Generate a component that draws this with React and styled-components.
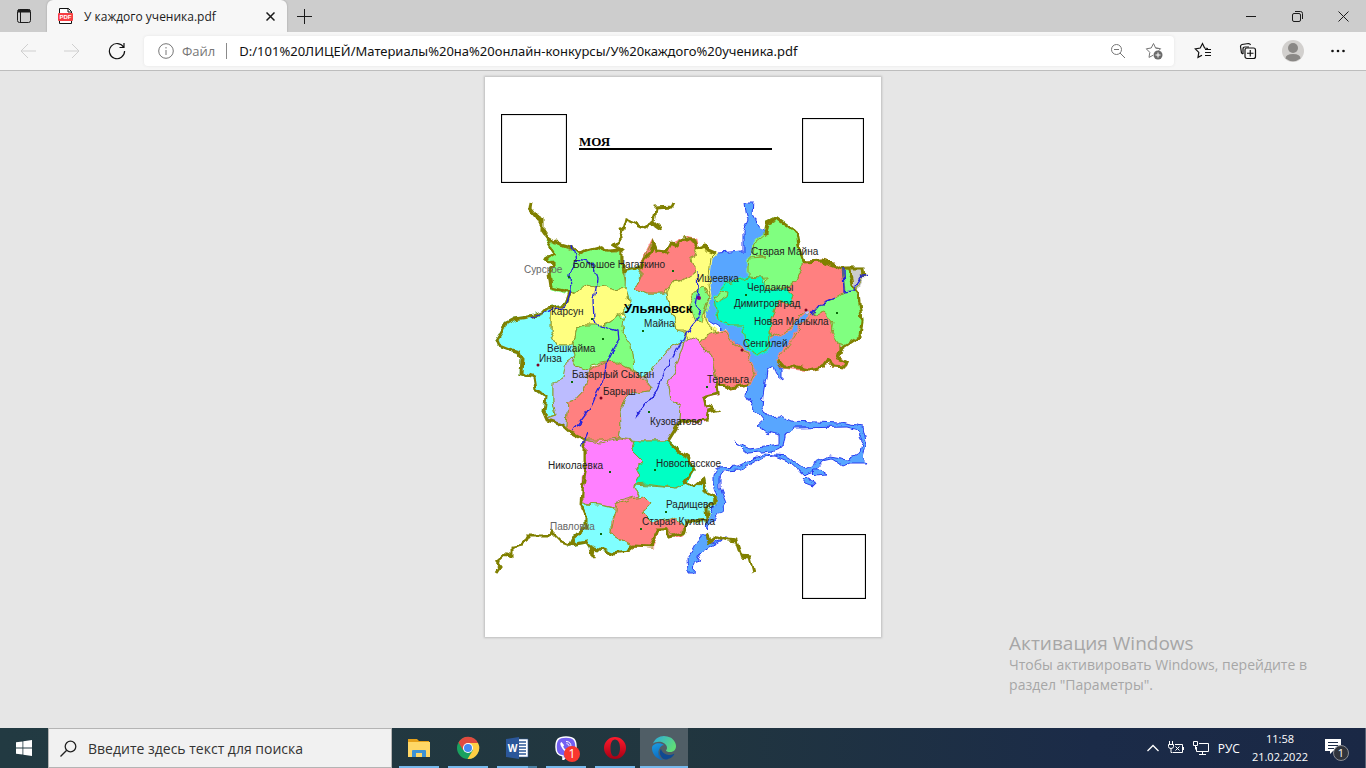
import React from 'react';
import styled, { createGlobalStyle, css } from 'styled-components';

const GlobalStyle = createGlobalStyle`
  * {
    box-sizing: border-box;
  }
  body {
    margin: 0;
    overflow: hidden;
    font-family: 'Open Sans', 'Noto Sans', sans-serif;
    color: #1b1b1b;
  }
  button {
    padding: 0;
    border: 0;
    background: none;
    font: inherit;
    color: inherit;
  }
  svg {
    display: block;
  }
`;

/* ---------- map data ---------- */

const colors = {
  green: '#80ff80',
  yellow: '#ffff80',
  cyan: '#80ffff',
  red: '#ff8080',
  lilac: '#bcbcff',
  pink: '#ff80ff',
  teal: '#00ffc4',
  grey: '#cccccc',
};

const districts = [
  ['green', '546,238 552,243 561,246 568,249 574,251 579,255 587,251 597,248 607,252 621,252 621,265 624,274 626,287 612,289 606,286 594,288 584,285 577,291 568,293 552,288 550,274 554,265 546,258 554,253 549,245'],
  ['cyan', '626,270 631,268 641,268 639,280 636,288 647,293 667,293 669,307 674,320 676,330 684,332 684,342 671,347 657,363 644,378 634,370 631,347 622,332 624,310 629,300 625,287'],
  ['red', '641,268 644,258 652,242 655,252 666,253 671,245 684,238 695,240 697,248 692,258 696,270 688,280 671,283 664,293 647,293 636,288 641,277'],
  ['yellow', '697,248 705,245 708,250 715,254 711,258 708,285 710,297 704,312 708,325 717,332 725,330 723,336 710,338 700,342 688,338 684,330 676,330 674,320 669,307 667,293 671,283 680,282 695,272 692,258'],
  ['green', '694,291 705,288 709,298 704,312 702,322 695,320 690,305'],
  ['yellow', '570,293 566,305 551,307 551,333 557,345 572,345 576,328 587,325 601,326 617,317 622,313 629,302 626,287 612,289 606,286 594,288 584,285 577,291'],
  ['green', '576,328 587,325 605,325 617,316 624,320 622,332 631,345 634,370 615,363 605,362 590,365 588,370 575,366 574,350 572,345'],
  ['cyan', '566,305 551,307 542,313 534,316 514,319 506,323 502,332 497,340 499,345 509,349 519,352 522,360 521,373 534,377 536,390 546,397 544,413 550,417 556,415 553,400 553,385 565,377 568,360 575,356 572,345 557,345 551,333 551,308'],
  ['lilac', '563,377 566,362 572,357 576,366 588,370 592,372 584,390 575,400 568,402 566,427 552,422 547,418 556,415 553,400 553,382'],
  ['red', '590,370 605,363 618,362 634,372 641,378 651,387 650,391 635,393 625,397 620,410 621,425 618,438 600,440 585,440 571,433 566,425 568,402 575,400 584,390'],
  ['lilac', '684,342 671,347 657,363 644,378 651,387 650,391 635,393 625,397 620,410 621,425 618,438 640,441 668,441 671,436 680,422 681,405 670,400 668,385 674,372 680,355'],
  ['pink', '684,342 690,337 700,343 712,357 715,375 718,393 703,397 705,405 708,412 705,421 680,422 681,405 670,400 668,385 674,372 680,355'],
  ['red', '700,343 702,338 715,333 725,330 735,345 747,353 755,370 748,385 730,388 718,383 714,370 712,357'],
  ['pink', '584,440 600,443 618,439 634,441 632,450 644,462 636,467 640,475 634,485 638,495 620,500 615,508 600,505 583,503 583,480 586,465'],
  ['cyan', '634,485 664,487 677,488 686,483 695,487 703,481 706,493 717,498 709,510 706,522 687,522 680,530 655,528 640,515 638,495'],
  ['teal', '634,441 645,441 668,441 680,452 690,463 693,470 686,483 675,488 660,486 645,484 634,485 640,475 636,467 644,462 632,450'],
  ['cyan', '582,504 600,505 612,508 617,512 611,520 611,533 617,537 632,546 627,552 614,553 600,549 591,548 587,542 570,545 574,537 586,527 586,517'],
  ['red', '617,505 630,499 644,497 649,502 642,513 651,522 671,518 684,525 682,535 674,537 667,528 657,530 652,547 634,546 617,537 611,533 614,518'],
  ['red', '804,262 823,261 842,268 845,292 838,300 832,300 830,315 833,330 840,343 838,358 847,362 845,367 833,366 827,360 822,367 810,370 783,367 777,360 790,343 798,330 812,315 806,310 800,315 790,330 772,337 770,332 771,318 779,300 790,303 793,295 785,288 795,283'],
  ['green', '777,218 787,225 797,233 800,250 804,262 800,272 795,283 785,288 765,290 767,278 748,279 748,268 749,258 765,257 753,255 755,243 765,235 767,223'],
  ['teal', '718,320 715,297 726,284 740,280 748,277 762,278 767,290 785,288 793,295 790,303 779,300 771,318 770,332 769,348 758,355 748,348 743,325 730,325'],
  ['green', '715,298 721,291 728,292 727,297 719,301'],
  ['green', '842,268 850,270 853,285 858,292 862,320 860,335 845,345 838,343 832,333 834,322 823,312 813,315 822,303 837,297 845,292'],
  ['grey', '850,268 862,268 862,277 857,287 853,285'],
];

const waters = [
  // Volga with its reservoir and the southern loop
  '745,202 754,202 753,215 760,228 767,234 757,240 755,250 749,258 748,278 738,281 726,284 715,297 718,318 730,325 743,325 748,348 758,355 768,349 770,336 790,330 800,315 808,310 812,315 798,330 790,343 777,360 782,370 782,380 777,376 774,366 767,370 763,395 762,408 767,417 780,416 790,421 840,423 863,427 866,441 862,457 867,463 850,463 843,466 832,459 823,461 815,470 803,474 790,462 775,456 763,457 740,470 724,471 720,478 720,488 726,503 720,513 707,530 706,522 718,497 713,483 713,475 718,467 738,466 763,454 788,456 804,469 822,460 830,457 847,460 860,453 863,440 858,430 847,427 795,428 785,435 783,447 772,451 748,453 735,442 750,449 765,447 779,445 779,435 767,432 757,425 763,420 755,410 747,395 748,385 755,370 747,353 735,343 723,330 707,320 705,313 710,297 708,283 711,258 717,253 743,251 743,232 748,220 746,212',
  '700,536 706,536 709,544 720,540 728,537 710,547 703,552 697,554 701,560 695,562 694,573 688,573 687,558 694,548',
  '802,478 809,477 814,486 806,483',
  '811,469 820,469 827,474 817,475',
];

const borders = [
  '531,202 530,208 537,217 542,220 542,230 547,237 561,245 572,248 579,254 587,250 597,247 607,251 622,250',
  '674,203 672,207 656,208 654,223 661,230 651,223 644,227 626,219 624,227 619,230 622,238 614,245 622,250 622,262 624,270 631,268 641,268 644,260 651,253 653,243 657,252 666,253 671,243 677,245 684,237 686,240 693,240 697,248 705,245 708,250 715,253',
  '547,237 549,245 554,253 546,258 554,265 549,273 551,287 566,290 570,293 566,305 547,308 542,313 534,316 514,319 506,323 502,332 497,340 499,345 509,349 519,352 522,360 521,373 534,377 536,390 546,397 544,413 547,420 562,425 571,433 584,440 584,460 586,467 582,490 581,505 586,517 586,527 574,537 570,545 587,542 591,548 593,557 594,548 604,550 614,554 627,552 634,546 651,547 657,530 667,530 669,537 684,533 687,522 707,520 706,508 717,498 705,492 703,480 695,487 685,482 693,470 687,457 680,452 668,441 680,422 707,420 708,412 716,410 705,405 703,397 718,393 717,383 730,388 748,385',
  '570,545 561,542 554,535 551,532 549,536 527,536 522,545 512,547 512,556 507,554 497,563 500,567 496,573',
  '765,235 767,223 777,218 787,225 797,233 800,250 804,262 823,261 842,268 862,268 863,277',
  '850,269 853,285 859,293 862,320 860,337 840,350 838,358 847,362 845,367 833,366 827,360 822,367 810,370 797,367 783,367 777,360',
  '707,533 709,543 717,537 728,540 736,541 741,556 750,557 754,573',
];

const streams = [
  '572,247 576,260 570,275 571,290 566,307 545,312 530,318',
  '576,260 592,263 597,278 593,300 594,320 600,326 618,331 619,340 612,352 606,364 604,380 597,393 592,405 583,417 577,425 573,432',
  '697,270 698,290 695,305 700,315 692,325 684,337 676,352 665,370 657,390 645,405 635,417',
  '812,315 822,303 835,297',
  '843,268 844,292 853,291 857,283 862,276 868,275',
  '588,433 585,440 581,448',
];

const towns = [
  ['Сурское', 524, 273, 'faded'],
  ['Большое Нагаткино', 573, 268],
  ['Ишеевка', 697, 282],
  ['Старая Майна', 751, 255],
  ['Чердаклы', 747, 291],
  ['Димитровград', 734, 307],
  ['Новая Малыкла', 754, 325],
  ['Сенгилей', 743, 347],
  ['Тереньга', 707, 383],
  ['Карсун', 551, 315],
  ['Ульяновск', 624, 313, 'capital'],
  ['Майна', 644, 327],
  ['Вешкайма', 547, 352],
  ['Инза', 539, 362],
  ['Базарный Сызган', 572, 378],
  ['Барыш', 603, 395],
  ['Кузоватово', 650, 425],
  ['Новоспасское', 656, 467],
  ['Николаевка', 548, 469],
  ['Радищево', 666, 508],
  ['Старая Кулатка', 642, 525],
  ['Павловка', 550, 530, 'faded'],
];

const villages = ['568,276', '672,270', '642,330', '602,338', '571,381', '648,411', '706,386', '609,471', '654,469', '665,511', '600,533', '640,528', '745,294', '836,312', '591,318'];
const cities = ['538,365', '601,398', '742,350', '806,310'];

const RegionMap = () => (
  <MapSvg viewBox="494 201 374 373" role="img" aria-label="Карта">
    <filter id="coast" x="0" y="0" width="1" height="1">
      <feTurbulence type="fractalNoise" baseFrequency="0.14" numOctaves="1" seed="4" />
      <feDisplacementMap in="SourceGraphic" scale="8" xChannelSelector="R" yChannelSelector="G" />
    </filter>
    <g filter="url(#coast)">
      {/* keeps the filter area equal to the whole view */}
      <rect x="494" y="201" width="374" height="373" fill="#fff" />
      {waters.map((points) => (
        <polygon key={points} points={points} fill="#59a6ff" stroke="#2a3cf0" />
      ))}
      {/* wide strokes close the seams between neighbours */}
      {districts.map(([color, points]) => (
        <polygon key={points} points={points} fill={colors[color]} stroke={colors[color]} strokeWidth="3" />
      ))}
      {districts.map(([color, points]) => (
        <polygon key={points} points={points} fill={colors[color]} stroke="#8f9a2c" />
      ))}
      {borders.map((points) => (
        <polyline key={points} points={points} fill="none" stroke="#808000" strokeWidth="3" />
      ))}
      {streams.map((points) => (
        <polyline key={points} points={points} fill="none" stroke="#2222dd" strokeWidth="1.3" />
      ))}
      <path d="M803 311q4-2 8 2l-3 3z" fill="#bcbcff" stroke="#8f9a2c" strokeWidth=".5" />
    </g>
    {villages.map((spot) => {
      const [x, y] = spot.split(',');
      return <rect key={spot} x={x} y={y} width="2" height="2" fill="#0a6b0a" />;
    })}
    {cities.map((spot) => {
      const [x, y] = spot.split(',');
      return <circle key={spot} cx={x} cy={y} r="1.5" fill="#800020" />;
    })}
    <circle cx="699" cy="298" r="2" fill="#800080" />
    {towns.map(([name, x, y, kind]) => (
      <Town key={name} x={x} y={y} $kind={kind}>
        {name}
      </Town>
    ))}
  </MapSvg>
);

/* ---------- icons ---------- */

const Line = ({ size = 16, box = 16, children, ...rest }) => (
  <svg width={size} height={size} viewBox={`0 0 ${box} ${box}`} fill="none" stroke="currentColor" aria-hidden="true" {...rest}>
    {children}
  </svg>
);

const TabsIcon = () => (
  <Line>
    <rect x="1.5" y="1.5" width="13" height="13" rx="2" />
    <path d="M4.5 4v10" />
    <path d="M2 3h12" strokeWidth="3" />
  </Line>
);

const PdfIcon = () => (
  <svg width="16" height="16" viewBox="0 0 16 16" aria-hidden="true">
    <path d="M1.5 15.5V.5h9l3 3v12z" fill="#fff" stroke="#111" />
    <path d="M10 .5V4h3.5" fill="none" stroke="#111" />
    <rect y="5" width="15" height="8" rx="1" fill="#f73e42" />
    <text x="7.5" y="11" textAnchor="middle" fontSize="6" fontWeight="700" fontFamily="Liberation Sans, sans-serif" fill="#fff">PDF</text>
  </svg>
);

const starPath = 'M14 6.5 10.6 6 8.5 1.5 6.2 6 1.3 6.8l3.5 3.6-.8 5 4-2.1';

const ExplorerIcon = () => (
  <svg width="24" height="24" viewBox="0 0 24 24" aria-hidden="true">
    <path d="M1 3h9l2 2h10v15H1z" fill="#e6a11a" />
    <path d="M1 6h22v15H1z" fill="#ffd766" />
    <path d="M5 21v-6q0-1 1-1h12q1 0 1 1v6h-4v-4H9v4z" fill="#3d92d4" />
  </svg>
);

const ChromeIcon = () => (
  <svg width="24" height="24" viewBox="0 0 24 24" aria-hidden="true">
    <circle cx="12" cy="12" r="11" fill="#1aa15f" />
    <path d="M2.5 6.5A11 11 0 0 1 22 7H12L7 14z" fill="#e04a3f" />
    <path d="M22 7A11 11 0 0 1 11.5 23L17 14 12 7z" fill="#ffce44" />
    <circle cx="12" cy="12" r="5" fill="#fff" />
    <circle cx="12" cy="12" r="4" fill="#4688f1" />
  </svg>
);

const WordIcon = () => (
  <svg width="24" height="24" viewBox="0 0 24 24" aria-hidden="true">
    <path d="M13 3h10v18H13z" fill="#fff" stroke="#2b5797" strokeWidth=".6" />
    <path d="M14 6h7M14 9h7M14 12h7M14 15h7M14 18h7" stroke="#2b5797" strokeWidth="1.4" />
    <path d="M1 3 14 1v22L1 21z" fill="#2b579a" />
    <text x="7.5" y="16" textAnchor="middle" fontSize="10" fontWeight="700" fontFamily="Open Sans, sans-serif" fill="#fff">W</text>
  </svg>
);

const ViberIcon = () => (
  <svg width="24" height="24" viewBox="0 0 24 24" aria-hidden="true">
    <path d="M12 1c8 0 10 3 10 10 0 6-3 9-9 9l-4 4v-4c-5-1-7-3-7-9C2 4 4 1 12 1z" fill="#7360f2" stroke="#fff" strokeWidth="1.5" />
    <path d="M7.500 6c-2 1-1 3 0 5 1.500 3 3.500 5 6.500 6 2 .5 3-2 2-2.700l-2.300-1.500-1.500 1.200c-1.500-.5-2.500-2-3-3.400l1-1.300z" fill="#fff" />
    <path d="M12 5.500c3.500 0 5 2 5 5M12.500 7.700c1.700.2 2.500 1 2.600 2.600" fill="none" stroke="#fff" />
  </svg>
);

const OperaIcon = () => (
  <svg width="24" height="24" viewBox="0 0 24 24" aria-hidden="true">
    <linearGradient id="opera" x2="0" y2="1">
      <stop stopColor="#ff1b2d" />
      <stop offset="1" stopColor="#a70014" />
    </linearGradient>
    <path fillRule="evenodd" d="M12 1a11 11 0 1 0 0 22 11 11 0 0 0 0-22zm0 2.500c3 0 5 3.500 5 8.500s-2 8.500-5 8.500S7.500 17 7.500 12s1.500-8.500 4.500-8.500z" fill="url(#opera)" />
  </svg>
);

const EdgeIcon = () => (
  <svg width="24" height="24" viewBox="0 0 24 24" aria-hidden="true">
    <linearGradient id="edgeTop" x2="1" y2=".5">
      <stop stopColor="#2aa8e0" />
      <stop offset="1" stopColor="#5fdc78" />
    </linearGradient>
    <linearGradient id="edgeLow" x2=".3" y2="1">
      <stop stopColor="#1b9de2" />
      <stop offset="1" stopColor="#0f6cc0" />
    </linearGradient>
    <path d="M21.860 17.860q.14 0 .25.12.1.13.1.25t-.11.33l-.32.46-.43.53-.44.5q-.26.25-.38.37l-.22.23q-.58.53-1.340 1.040-.76.51-1.600.91-.86.4-1.740.64t-1.670.24q-.9 0-1.690-.28-.8-.28-1.480-.78-.68-.5-1.220-1.170-.53-.66-.92-1.440-.38-.77-.58-1.600-.2-.83-.2-1.670 0-1 .32-1.960.33-.97.87-1.800.14.95.55 1.770.41.82 1.020 1.500.6.68 1.380 1.210.78.54 1.640.9.86.36 1.770.56.92.2 1.800.2 1.120 0 2.180-.24 1.060-.23 2.060-.72l.2-.1.2-.05z" fill="#104a91" />
    <path d="M6.360 16.590q0 1.100.27 2.150.27 1.060.78 2.030.51.96 1.240 1.770.74.82 1.660 1.400-1.470-.2-2.800-.74-1.330-.55-2.480-1.370-1.150-.83-2.080-1.900-.92-1.070-1.580-2.330T.36 14.940Q0 13.540 0 12.060q0-.81.32-1.490.31-.68.83-1.230.53-.55 1.200-.96.66-.4 1.350-.66.74-.27 1.500-.39.78-.12 1.550-.12.7 0 1.420.1.72.12 1.400.35.68.23 1.320.57.63.35 1.160.83-.35 0-.7.07-.33.07-.65.23v-.02q-.63.28-1.200.74-.57.46-1.050 1.040-.48.58-.87 1.260-.38.67-.65 1.390-.27.71-.42 1.440-.15.72-.15 1.380z" fill="url(#edgeLow)" />
    <path d="M8 14q-2 3 0 7 1.500 2.500 4.500 2.900Q9 24 7 20.500 5.500 17 8 14z" fill="#0f6cc0" />
    <path d="M11.960.06q1.700 0 3.330.39 1.630.38 3.070 1.150 1.430.77 2.620 1.930 1.180 1.160 1.980 2.700.49.94.76 1.960.28 1 .28 2.080 0 .89-.23 1.700-.24.8-.69 1.480-.45.68-1.100 1.220-.64.53-1.450.88-.54.24-1.110.36-.58.13-1.160.13-.42 0-.97-.03-.54-.03-1.100-.12-.55-.1-1.050-.28-.5-.19-.84-.5-.12-.09-.23-.24-.1-.16-.1-.33 0-.15.16-.35.16-.2.35-.5.2-.28.36-.68.16-.4.16-.95 0-1.060-.4-1.960-.4-.91-1.060-1.640-.66-.74-1.520-1.280-.86-.55-1.790-.89-.84-.3-1.720-.44-.87-.14-1.760-.14-1.550 0-3.060.45T.94 7.550q.71-1.740 1.810-3.130 1.100-1.380 2.520-2.350Q6.680 1.100 8.370.58q1.700-.52 3.580-.52Z" fill="url(#edgeTop)" />
  </svg>
);

const apps = [
  { name: 'Проводник', icon: <ExplorerIcon /> },
  { name: 'Chrome', icon: <ChromeIcon /> },
  { name: 'Word', icon: <WordIcon />, stacked: true },
  { name: 'Viber', icon: <ViberIcon />, badge: 1 },
  { name: 'Opera', icon: <OperaIcon /> },
  { name: 'Edge', icon: <EdgeIcon />, active: true },
];

/* ---------- page ---------- */

const App = () => (
  <Desktop>
    <GlobalStyle />
    <TitleBar>
      <TabMenu aria-label="Меню вкладок"><TabsIcon /></TabMenu>
      <Tab>
        <PdfIcon />
        <TabName>У каждого ученика.pdf</TabName>
        <CloseTab aria-label="Закрыть вкладку">
          <Line size={9} box={9} strokeWidth="1.5"><path d="M.5.5l8 8M8.500.5l-8 8" /></Line>
        </CloseTab>
      </Tab>
      <NewTab aria-label="Новая вкладка">
        <Line size={15} box={15}><path d="M7.500 0v15M0 7.500h15" /></Line>
      </NewTab>
      <WindowButtons>
        <button aria-label="Свернуть"><Line size={10} box={10}><path d="M0 5.500h10" /></Line></button>
        <button aria-label="Восстановить">
          <Line size={11} box={11}>
            <rect x=".5" y="2.500" width="8" height="8" rx="1.500" />
            <path d="M3 .5h5.500q2 0 2 2V8" />
          </Line>
        </button>
        <button aria-label="Закрыть"><Line size={11} box={11}><path d="M.5.5l10 10M10.500.5l-10 10" /></Line></button>
      </WindowButtons>
    </TitleBar>

    <Toolbar>
      <ToolButton disabled aria-label="Назад"><Line><path d="M8 1 1 8l7 7M1 8h15" /></Line></ToolButton>
      <ToolButton disabled aria-label="Вперед"><Line><path d="m8 1 7 7-7 7M15 8H0" /></Line></ToolButton>
      <ToolButton aria-label="Обновить">
        <Line size={18} box={18} strokeWidth="1.2"><path d="M15.700 5.500A7.600 7.600 0 1 0 16.600 9M16 1v4.500h-4.500" /></Line>
      </ToolButton>
      <AddressBar>
        <Line><circle cx="8" cy="8" r="7.300" /><path d="M8 7v5M8 4v1.500" /></Line>
        <Scheme htmlFor="address">Файл</Scheme>
        <Address id="address" defaultValue="D:/101%20ЛИЦЕЙ/Материалы%20на%20онлайн-конкурсы/У%20каждого%20ученика.pdf" />
        <AddressButton aria-label="Уменьшить">
          <Line><circle cx="6.500" cy="6.500" r="5" /><path d="m10 10 5 5M4 6.500h5" /></Line>
        </AddressButton>
        <AddressButton aria-label="Добавить в избранное">
          <Line size={18} box={18}>
            <path d={starPath} />
            <path d="M10.600 6l5 .7-2 2" />
            <circle cx="13" cy="13" r="4.500" fill="#6b6b6b" stroke="none" />
            <path d="M13 10.500v5M10.500 13h5" stroke="#fff" />
          </Line>
        </AddressButton>
      </AddressBar>
      <ToolButton aria-label="Избранное">
        <Line size={18} box={18}>
          <path d={starPath} strokeWidth="1.2" />
          <path d="M11 7.500h6M11 10.500h6M11 13.500h6" strokeWidth="1.2" />
        </Line>
      </ToolButton>
      <ToolButton aria-label="Коллекции">
        <Line size={18} box={18} strokeWidth="1.2">
          <path d="M4 12 2.500 11 1.500 4.500q0-1.500 1.500-2l6.500-1q1.500 0 2 1.500" />
          <path d="M4 12V7q0-2 2-2h4" />
          <rect x="6" y="6" width="10.500" height="10.500" rx="2" />
          <path d="M11.250 8v6.500M8 11.250h6.500" />
        </Line>
      </ToolButton>
      <ToolButton aria-label="Профиль">
        <svg width="22" height="22" viewBox="0 0 22 22" aria-hidden="true">
          <circle cx="11" cy="11" r="11" fill="#d2d0ce" />
          <circle cx="11" cy="8" r="5" fill="#8a8886" />
          <path d="M3.500 18.500q0-4.500 7.500-4.500t7.500 4.500q-7.500 5.500-15 0z" fill="#8a8886" />
        </svg>
      </ToolButton>
      <ToolButton aria-label="Параметры">
        <Line><g fill="currentColor" stroke="none"><circle cx="2.500" cy="8" r="1.300" /><circle cx="8" cy="8" r="1.300" /><circle cx="13.500" cy="8" r="1.300" /></g></Line>
      </ToolButton>
    </Toolbar>

    <Viewer>
      <Sheet>
        <SheetHeader>
          <Frame $width={66} $height={69} />
          <SheetTitle>МОЯ</SheetTitle>
          <Frame $width={62} $height={65} />
        </SheetHeader>
        <Figure>
          <RegionMap />
          <CornerFrame $width={64} $height={65} />
        </Figure>
      </Sheet>
      <Activation>
        <h2>Активация Windows</h2>
        <p>Чтобы активировать Windows, перейдите в<br />раздел "Параметры".</p>
      </Activation>
    </Viewer>

    <Taskbar>
      <Start aria-label="Пуск">
        <svg width="16" height="16" viewBox="0 0 16 16" fill="#fff" aria-hidden="true">
          <path d="M0 2.300 6.500 1.400v6.100H0zM7.300 1.300 16 0v7.500H7.300zM0 8.400h6.500v6.200L0 13.700zM7.300 8.400H16V16l-8.700-1.200z" />
        </svg>
      </Start>
      <Search>
        <Line size={17} box={17} strokeWidth="1.3"><circle cx="10.500" cy="6.500" r="5.300" /><path d="M6.700 10.300.5 16.500" /></Line>
        <input aria-label="Поиск" placeholder="Введите здесь текст для поиска" />
      </Search>
      <Apps>
        {apps.map(({ name, icon, badge, active, stacked }) => (
          <AppButton key={name} aria-label={name} $active={active} $stacked={stacked}>
            {icon}
            {badge && <Badge>{badge}</Badge>}
          </AppButton>
        ))}
      </Apps>
      <Tray>
        <Line size={12} box={12} strokeWidth="1.3"><path d="m.5 9 5.500-5.500L11.500 9" /></Line>
        <Line>
          <path d="M1.500 1v3M4.500 1v3M.5 4.500h5v2q0 2-2.500 2t-2.500-2zM3 8.500v4h1.500" />
          <path d="M7 4.500h7.500v8H5M15.500 7v3M7.500 6.500l4 4M11.500 6.500l-4 4" />
        </Line>
        <Line>
          <path d="M6 3.500h9.500v8h-12V7M9.500 11.500v3M6 14.500h7M.5 1.500h4v4h-4zM2.500 5.500v4" />
        </Line>
        <span>РУС</span>
        <Clock>
          <span>11:58</span>
          <span>21.02.2022</span>
        </Clock>
        <Notices aria-label="Уведомления">
          <svg width="24" height="24" viewBox="0 0 24 24" aria-hidden="true">
            <path d="M0 1h16v12H8l-3 3v-3H0z" fill="#fff" />
            <path d="M3 4.500h10M3 7.500h10M3 10.500h6" stroke="#1c2c48" />
          </svg>
          <NoticeCount>1</NoticeCount>
        </Notices>
      </Tray>
    </Taskbar>
  </Desktop>
);

const Desktop = styled.div`
  display: flex;
  flex-direction: column;
  height: 100vh;
`;

const TitleBar = styled.header`
  display: flex;
  align-items: stretch;
  height: 32px;
  background: #cdcdcd;
`;

const TabMenu = styled.button`
  display: grid;
  place-items: center;
  width: 47px;
`;

const Tab = styled.div`
  display: flex;
  align-items: center;
  gap: 10px;
  width: 240px;
  padding: 0 12px 0 11px;
  border-radius: 6px 6px 0 0;
  background: #f7f7f7;
  box-shadow: 0 0 2px #999;
  clip-path: inset(0 -3px 0 -3px);
`;

const TabName = styled.span`
  flex: 1;
  font-size: 12px;
`;

const CloseTab = styled.button`
  display: grid;
  place-items: center;
`;

const NewTab = styled.button`
  display: grid;
  place-items: center;
  width: 34px;
`;

const WindowButtons = styled.div`
  display: flex;
  margin-left: auto;
  button {
    display: grid;
    place-items: center;
    width: 46px;
  }
`;

const Toolbar = styled.nav`
  display: flex;
  align-items: center;
  height: 39px;
  padding: 0 6px;
  background: #f7f7f7;
  border-bottom: 1px solid #bdbdbd;
`;

const ToolButton = styled.button`
  display: grid;
  place-items: center;
  width: 45px;
  height: 30px;
  color: #111;
  &:disabled {
    width: 44px;
    color: #cfcfcf;
  }
`;

const AddressBar = styled.div`
  flex: 1;
  display: flex;
  align-items: center;
  height: 30px;
  margin: 0 6px 0 5px;
  padding: 0 2px 0 14px;
  border-radius: 4px;
  background: #fff;
  box-shadow: 0 0 3px #e2e2e2;
  color: #767676;
`;

const Scheme = styled.label`
  margin-left: 8px;
  padding-right: 11px;
  border-right: 1px solid #8a8a8a;
  font-size: 13px;
  line-height: 16px;
`;

const Address = styled.input`
  flex: 1;
  min-width: 0;
  padding: 0 12px;
  border: 0;
  outline: 0;
  background: none;
  color: #111;
  font-family: 'Noto Sans', sans-serif;
  font-size: 13px;
`;

const AddressButton = styled.button`
  display: grid;
  place-items: center;
  width: 36px;
  height: 30px;
`;

const Viewer = styled.main`
  position: relative;
  flex: 1;
  min-height: 0;
  display: flex;
  justify-content: center;
  align-items: flex-start;
  padding-top: 6px;
  background: #e6e6e6;
`;

const Sheet = styled.article`
  width: 396px;
  padding: 37px 0 38px;
  background: #fff;
  box-shadow: 0 0 2px 1px #bdbdbd;
`;

const SheetHeader = styled.header`
  display: flex;
  align-items: flex-end;
  padding: 0 17px 0 16px;
`;

const Frame = styled.div`
  width: ${({ $width }) => $width}px;
  height: ${({ $height }) => $height}px;
  border: 1px solid #000;
  box-shadow: inset 0 0 1px #000;
`;

const SheetTitle = styled.h1`
  flex: 1;
  margin: 0 30px 33px 12px;
  border-bottom: 2px solid #000;
  font: bold 13px/13px 'Liberation Serif', serif;
  color: #000;
`;

const Figure = styled.div`
  display: grid;
  height: 398px;
  margin: 18px 13px 0 9px;
  > * {
    grid-area: 1 / 1;
  }
`;

const MapSvg = styled.svg`
  width: 374px;
  height: 373px;
`;

const CornerFrame = styled(Frame)`
  align-self: end;
  justify-self: end;
  margin-right: 2px;
  background: #fff;
  z-index: 1;
`;

const Town = styled.text`
  font: 10px 'Liberation Sans', sans-serif;
  fill: #222;
  ${({ $kind }) => $kind === 'faded' && css`
    fill: #666;
  `}
  ${({ $kind }) => $kind === 'capital' && css`
    font-size: 13px;
    font-weight: bold;
    fill: #000;
  `}
`;

const Activation = styled.aside`
  position: absolute;
  right: 59px;
  bottom: 33px;
  color: #a6a6a6;
  h2 {
    margin: 0;
    font-size: 19px;
    font-weight: 400;
    line-height: 23px;
  }
  p {
    margin: 0;
    font-size: 14px;
    line-height: 20px;
  }
`;

const Taskbar = styled.footer`
  display: flex;
  height: 40px;
  background: linear-gradient(90deg, #223a42, #21363f 50%, #1b2b48 80%, #1a2845);
  color: #fff;
`;

const Start = styled.button`
  display: grid;
  place-items: center;
  width: 48px;
`;

const Search = styled.div`
  display: flex;
  align-items: center;
  gap: 11px;
  width: 344px;
  padding: 0 11px;
  border: 1px solid #b4b4b4;
  background: #f1f1f1;
  color: #222;
  input {
    flex: 1;
    min-width: 0;
    padding: 0;
    border: 0;
    outline: 0;
    background: none;
    font-family: inherit;
    font-size: 14px;
  }
  input::placeholder {
    color: #333;
  }
`;

const Apps = styled.div`
  display: flex;
  gap: 1px;
  padding-left: 3px;
`;

const AppButton = styled.button`
  position: relative;
  display: grid;
  place-items: center;
  width: 48px;
  background: ${({ $active }) => ($active ? '#505e66' : 'none')};
  &::after {
    content: '';
    position: absolute;
    bottom: 0;
    left: ${({ $active }) => ($active ? 0 : 4)}px;
    right: ${({ $active }) => ($active ? 0 : 4)}px;
    height: 2px;
    background: ${({ $stacked }) => ($stacked ? 'linear-gradient(90deg, #76b9ed 31px, #4b80a3 31px)' : '#76b9ed')};
  }
`;

const Badge = styled.span`
  position: absolute;
  right: 10px;
  bottom: 6px;
  width: 16px;
  border-radius: 8px;
  background: #f9372e;
  font-size: 12px;
  line-height: 16px;
`;

const Tray = styled.div`
  display: flex;
  align-items: center;
  gap: 9px;
  margin-left: auto;
  border-right: 1px solid #5a6478;
  padding-right: 4px;
  font-size: 12px;
`;

const Clock = styled.time`
  display: flex;
  flex-direction: column;
  align-items: center;
  margin: 0 8px 0 3px;
  font-size: 11px;
  line-height: 18px;
`;

const Notices = styled.button`
  position: relative;
  width: 36px;
  padding-top: 3px;
`;

const NoticeCount = styled.span`
  position: absolute;
  left: 8px;
  top: 10px;
  width: 16px;
  border: 1px solid #8a8d94;
  border-radius: 8px;
  background: #30343c;
  font-size: 11px;
  line-height: 14px;
`;

export default App;
